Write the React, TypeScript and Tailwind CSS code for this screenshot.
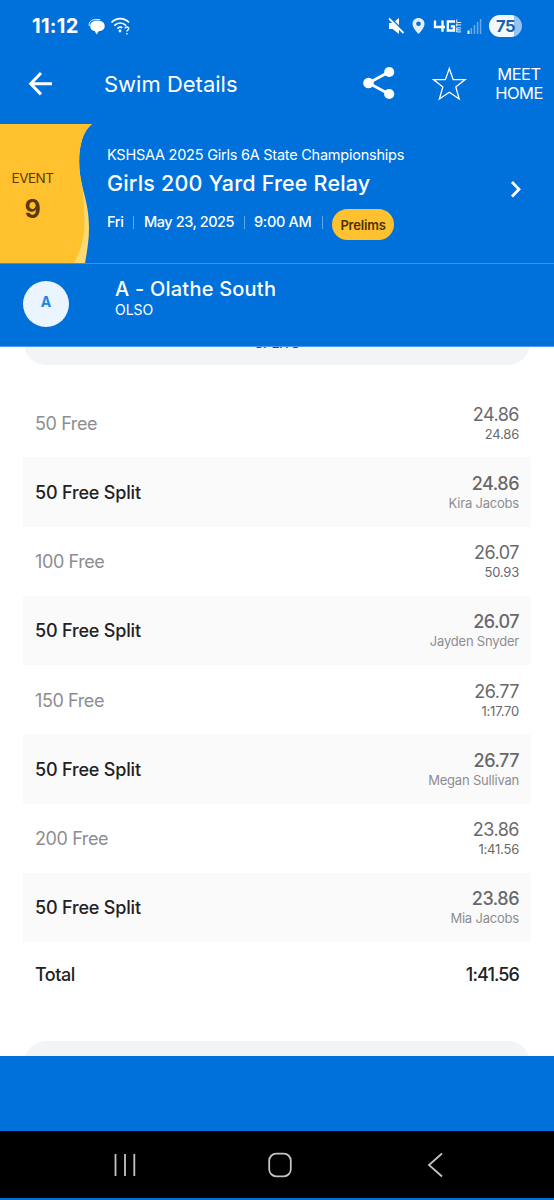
import React from 'react';

interface SplitRow {
    label: string;
    time: string;
    detail: string;
    relay?: boolean;
}

const splits: SplitRow[] = [
    {label: '50 Free', time: '24.86', detail: '24.86'},
    {label: '50 Free Split', time: '24.86', detail: 'Kira Jacobs', relay: true},
    {label: '100 Free', time: '26.07', detail: '50.93'},
    {label: '50 Free Split', time: '26.07', detail: 'Jayden Snyder', relay: true},
    {label: '150 Free', time: '26.77', detail: '1:17.70'},
    {label: '50 Free Split', time: '26.77', detail: 'Megan Sullivan', relay: true},
    {label: '200 Free', time: '23.86', detail: '1:41.56'},
    {label: '50 Free Split', time: '23.86', detail: 'Mia Jacobs', relay: true},
];

const StatusBar: React.FC = () => (
    <div className="flex h-[52px] items-center pl-8 pr-8">
        <span className="w-[47px] whitespace-nowrap text-[20px] font-bold leading-6 tracking-[0.3px]">11:12</span>
        <svg className="ml-[9px] mt-[2px]" width="18" height="18" viewBox="0 0 18 18" fill="none">
            <path d="M1.300 8C.6 4.200 3 1.700 7.200 1.700h5" stroke="#fff" strokeWidth="1"/>
            <path d="M9.400 2.800c4.600 0 7.300 1.900 7.300 5.200 0 3.200-2.300 5.100-6 5.200L8.600 16.500 6.700 13C3.800 12.600 2.200 10.800 2.200 8c0-3.300 2.700-5.200 7.200-5.200z" fill="#fff"/>
        </svg>
        <svg className="ml-[4px]" width="22" height="20" viewBox="0 0 22 20" fill="none" stroke="#fff" strokeWidth="1.700">
            <path d="M1.500 6.500c5-5.200 12.500-5.200 17.500 0M4.300 9.700c3.500-3.600 8.300-3.600 11.800 0M7.300 12.500c1.500-1.400 3.500-1.600 5-.7"/>
            <circle cx="10" cy="15" r="1.400" fill="#fff" stroke="none"/>
            <path d="M15 12.500c.2-2 3.800-1.900 3.700.1-.1 1.300-1.800 1.500-1.800 2.900M16.900 16.900v1.500" strokeWidth="1.400"/>
        </svg>

        <svg className="ml-auto" width="18" height="18" viewBox="0 0 18 18">
            <path d="M2 6h3.600l6.400-5v16l-6.400-5H2z" fill="#fff"/>
            <path d="M3.400 .8l14 14" stroke="#0070db" strokeWidth="1.500"/>
            <path d="M2 1.500l14.500 14.500" stroke="#fff" strokeWidth="1.800"/>
        </svg>
        <svg className="ml-[6px]" width="14" height="18" viewBox="0 0 14 18">
            <path d="M7.500 1C4.100 1 1.500 3.600 1.500 6.900 1.500 11 7.500 17 7.500 17s6-6 6-10.100C13.500 3.600 10.900 1 7.500 1z" fill="#e3effb"/>
            <circle cx="7.500" cy="6.800" r="2.300" fill="#0070db"/>
        </svg>
        <svg className="ml-[8px]" width="29" height="14" viewBox="0 0 29 14" fill="none" stroke="#fff">
            <path d="M2 1.500V8H12M9.500 1.500V12.800" strokeWidth="2.300"/>
            <path d="M22 2.500H14.800V11.500H21V7.300H17.800" strokeWidth="2.300"/>
            <path d="M23.700 .5v3h4.500M23.700 5.900h4.500M23.700 4.400v3M23.700 8.600v4.400M23.700 8.900h4.500M23.700 10.900h4M23.700 12.900h4.500" strokeWidth=".9"/>
        </svg>
        <svg className="ml-[5px]" width="15" height="16" viewBox="0 0 15 16">
            <path d="M.5 12.500h2V16h-2z" fill="#fff"/>
            <path d="M3.600 10h1.500v6H3.600zM6.700 7h1.500v9H6.700zM9.800 4h1.500v12H9.800zM12.800 1h1.500v15h-1.500z" fill="#6aaceb"/>
        </svg>
        <div className="ml-[7px] flex h-[22px] w-[33px] items-center justify-center rounded-full bg-[linear-gradient(90deg,#f3f8fd_76%,#96c2ef_76%)] text-[16.500px] font-bold leading-none tracking-[-0.500px] text-[#1b64a8]">75</div>
    </div>
);

const AppBar: React.FC = () => (
    <div className="flex h-[72px] items-start">
        <svg className="ml-[28px] mt-[19px]" width="26" height="26" viewBox="0 0 26 26" fill="none" stroke="#fff" strokeWidth="3">
            <path d="M24 12.700H3M13 2L2.700 12.700 13 23.400"/>
        </svg>
        <h1 className="ml-[50px] mt-[18px] whitespace-nowrap text-[22px] leading-7">Swim Details</h1>
        <svg className="ml-auto mt-[14px] shrink-0" width="34" height="34" viewBox="0 0 34 34" fill="#fff">
            <path d="M27 6L6.500 17 27 28" fill="none" stroke="#fff" strokeWidth="2.800"/>
            <circle cx="27.200" cy="6" r="5.100"/>
            <circle cx="6.500" cy="17" r="5.300"/>
            <circle cx="27.200" cy="28" r="5.100"/>
        </svg>
        <svg className="ml-[35px] mt-[14px] shrink-0" width="36" height="36" viewBox="0 0 36 36" fill="none" stroke="#fff" strokeWidth="1.300">
            <path d="M18.300 2.500L22.200 13.600H34.100L24.800 21 28.200 33 18.300 26.300 8.400 33 11.800 21 2.500 13.600H14.400z"/>
        </svg>
        <div className="mr-[11px] ml-[28px] mt-[13px] w-[48px] text-center text-[16.500px] leading-[19px] tracking-[-0.500px]">MEET HOME</div>
    </div>
);

const Separator: React.FC = () => <span className="h-[13px] w-px bg-[#62a9ec]"/>;

const EventCard: React.FC = () => (
    <div className="flex h-[140px] border-b border-[#3c90e6]">
        <div className="relative w-[93px] shrink-0">
            <svg className="absolute inset-0" width="93" height="139" viewBox="0 0 93 139">
                <path d="M0 0H92C79 10 77 36 81 56C84 72 89 82 89 104C89 118 86.500 130 85 139H0z" fill="#ffda70"/>
                <path d="M0 0H92C79 10 77 36 81 56C84 72 85 92 84 106C83 119 79 130 74 139H0z" fill="#ffc12e"/>
            </svg>
            <div className="relative flex w-[65px] flex-col items-center pt-[45px] text-[#5b3a08]">
                <span className="text-[13.500px] leading-[18px] tracking-[-0.500px]">EVENT</span>
                <span className="mt-[7px] text-[25px] font-bold leading-[30px]">9</span>
            </div>
        </div>
        <div className="ml-[14px] flex-1">
            <div className="mt-[22px] whitespace-nowrap text-[14.500px] leading-[18px] tracking-[-0.240px]">KSHSAA 2025 Girls 6A State Championships</div>
            <div className="mt-[6px] whitespace-nowrap text-[21.500px] font-medium leading-[26px] tracking-[0.180px]">Girls 200 Yard Free Relay</div>
            <div className="mt-[13px] flex h-[32px] items-start whitespace-nowrap text-[14.500px] font-medium leading-[18px]">
                <span className="w-[26px] pt-[4px] tracking-[-0.400px]">Fri</span>
                <span className="flex pt-[7px]"><Separator/></span>
                <span className="ml-[10px] w-[100px] pt-[4px] tracking-[-0.450px]">May 23, 2025</span>
                <span className="flex pt-[7px]"><Separator/></span>
                <span className="ml-[9px] w-[68px] pt-[4px] tracking-[-0.300px]">9:00 AM</span>
                <span className="flex pt-[7px]"><Separator/></span>
                <span className="ml-[9px] flex h-[31px] w-[62px] items-center justify-center rounded-full bg-[#ffc12e] text-[13px] font-semibold tracking-[-0.200px] text-[#4a3208]">Prelims</span>
            </div>
        </div>
        <svg className="mr-[31px] mt-[56px]" width="14" height="18" viewBox="0 0 14 18" fill="none" stroke="#fff" strokeWidth="2.800">
            <path d="M3 2L10 9.200 3 16.400"/>
        </svg>
    </div>
);

const TeamBar: React.FC = () => (
    <div className="flex h-[83px] border-b border-[#4d9ceb]">
        <div className="ml-[23px] mt-[17px] flex h-[46px] w-[46px] justify-center rounded-full bg-[#eaf5ff] pt-[12px] text-[14px] font-bold leading-[18px] text-[#1c85e6]">A</div>
        <div className="ml-[46px] mt-[12px]">
            <div className="whitespace-nowrap text-[20px] font-medium leading-[26px] tracking-[0.220px]">A - Olathe South</div>
            <div className="text-[14px] leading-[16px]">OLSO</div>
        </div>
    </div>
);

const Row: React.FC<{row: SplitRow}> = ({row}) => (
    <div className={row.relay
        ? 'flex h-[69.25px] items-center justify-between bg-[#fafafa] px-3 pt-[2px] text-[#222] font-medium tracking-[-0.180px]'
        : 'flex h-[69.25px] items-center justify-between px-3 pt-[2px] text-[#8d8d91] tracking-[-0.400px]'}>
        <span className="text-[18px] leading-6">{row.label}</span>
        <span className="flex flex-col items-end pb-[2px] text-[#69696c]">
            <span className="text-[18px] leading-[22px] tracking-[-0.500px]">{row.time}</span>
            <span className={row.relay
                ? 'text-[13px] font-normal leading-[16px] tracking-[-0.200px] text-[#8d8d91]'
                : 'text-[13px] leading-[16px] tracking-[-0.200px]'}>{row.detail}</span>
        </span>
    </div>
);

const NavigationBar: React.FC = () => (
    <div className="flex h-[67px] items-center bg-black text-[#c4c4c4]">
        <svg className="ml-[113px]" width="24" height="24" viewBox="0 0 24 24" stroke="currentColor" strokeWidth="1.800">
            <path d="M2.500 1v22M12 1v22M21.300 1v22"/>
        </svg>
        <svg className="ml-[131px]" width="24" height="26" viewBox="0 0 24 26" fill="none" stroke="currentColor" strokeWidth="1.800">
            <rect x="1.200" y="1.700" width="21.600" height="22.600" rx="7"/>
        </svg>
        <svg className="ml-[135px]" width="17" height="26" viewBox="0 0 17 26" fill="none" stroke="currentColor" strokeWidth="1.800">
            <path d="M15 1.500L2 13 15 24.500"/>
        </svg>
    </div>
);

const App: React.FC = () => (
    <div className="flex h-[1200px] w-[554px] flex-col overflow-hidden bg-[#0070db] font-['Inter',sans-serif] text-white">
        <StatusBar/>
        <AppBar/>
        <EventCard/>
        <TeamBar/>

        {/* Scrolled splits list */}
        <div className="h-[709px] overflow-hidden bg-white px-[23px]">
            <div className="mx-[1px] -mt-[26px] flex h-[44px] justify-center rounded-[24px] bg-[#f2f4f6] pt-[13px] text-[14px] font-medium leading-[18px] tracking-[-0.500px] text-[#3a4a5c]">SPLITS</div>
            <div className="mt-[23px]">
                {splits.map((row, i) => <Row key={i} row={row}/>)}
            </div>
            <div className="flex h-[65px] items-center justify-between px-3 text-[18px] font-medium text-[#222]">
                <span className="tracking-[-0.500px]">Total</span>
                <span className="tracking-[-0.900px]">1:41.56</span>
            </div>
            <div className="mx-[1px] mt-[34px] h-[44px] rounded-[24px] bg-[#f2f4f6]"/>
        </div>

        <div className="h-[75px] shrink-0"/>
        <NavigationBar/>
    </div>
);

export default App;
